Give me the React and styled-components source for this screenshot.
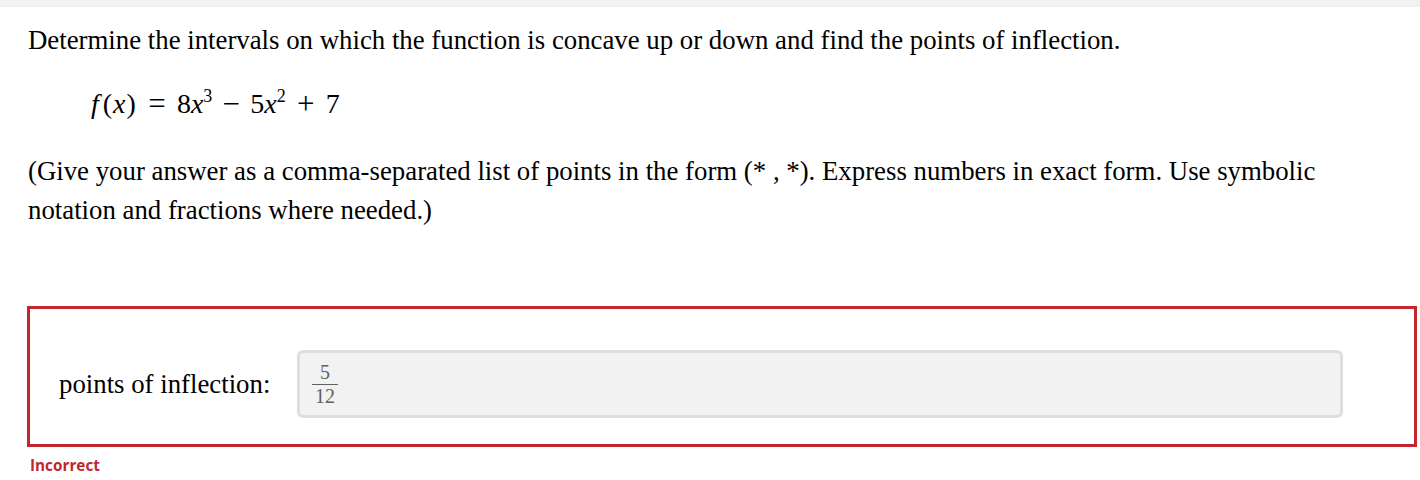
import React from "react";
import styled, { createGlobalStyle } from "styled-components";

const Global = createGlobalStyle`
  html, body { margin: 0; padding: 0; background: #fff; }
  body { font-family: "Liberation Serif", "Times New Roman", serif; color: #000; }
`;

const TopBand = styled.div`
  height: 6px;
  background: #f2f2f2;
  border-bottom: 1px solid #ececec;
`;

const Content = styled.div`
  padding: 0 3px 0 27px;
`;

const Prompt = styled.p`
  margin: 17px 0 0 1px;
  font-size: 26.8px;
  line-height: 32px;
`;

const Equation = styled.div`
  margin: 32px 0 0 64px;
  font-size: 28px;
  line-height: 32px;
  white-space: nowrap;
`;

const Term = styled.span`
  letter-spacing: ${(p) => p.$track || 0}px;
`;

const Var = styled.i`
  font-style: italic;
  margin-right: ${(p) => p.$gap || 0}px;
`;

const Sup = styled.sup`
  font-size: 18px;
  vertical-align: 11px;
  line-height: 0;
`;

const Op = styled.span`
  display: inline-block;
  width: ${(p) => p.$w}px;
  text-align: center;
  font-size: 31px;
  line-height: 32px;
  vertical-align: top;
`;

const Instructions = styled.p`
  margin: 32px 0 0 1px;
  max-width: 1340px;
  font-size: 26.8px;
  line-height: 39px;
`;

const AnswerBox = styled.div`
  margin-top: 76px;
  border: 3px solid #c1272d;
  padding: 41px 71px 26px 29px;
  display: flex;
  align-items: center;
`;

const Label = styled.span`
  font-size: 26.8px;
  width: 238px;
  flex-shrink: 0;
`;

const InputShell = styled.div`
  box-sizing: border-box;
  flex: 1;
  height: 68px;
  border: 3px solid #dedede;
  border-radius: 6px;
  background: #f2f2f2;
  display: flex;
  align-items: center;
  padding-left: 12px;
`;

const Fraction = styled.span`
  display: inline-flex;
  flex-direction: column;
  align-items: center;
  color: #606060;
  font-size: 20px;
  line-height: 19px;
`;

const Numerator = styled.span`
  padding: 0 3px 2px;
  border-bottom: 1px solid #606060;
  align-self: stretch;
  text-align: center;
`;

const Denominator = styled.span`
  padding: 2px 3px 0;
`;

const Feedback = styled.div`
  margin: 7px 0 0 3px;
  font-family: "Open Sans", "Noto Sans", sans-serif;
  font-weight: 700;
  font-size: 15.3px;
  line-height: 22px;
  color: #c1272d;
`;

export default function App() {
  return (
    <>
      <Global />
      <TopBand />
      <Content>
        <Prompt>
          Determine the intervals on which the function is concave up or down
          and find the points of inflection.
        </Prompt>
        <Equation>
          <Term $track={1}>
            <Var $gap={3}>f</Var>(<Var>x</Var>)
          </Term>
          <Op $w={40}>=</Op>
          <Term>
            8<Var>x</Var>
            <Sup>3</Sup>
          </Term>
          <Op $w={38}>−</Op>
          <Term>
            5<Var>x</Var>
            <Sup>2</Sup>
          </Term>
          <Op $w={40}>+</Op>
          <Term>7</Term>
        </Equation>
        <Instructions>
          (Give your answer as a comma-separated list of points in the form (* ,
          *). Express numbers in exact form. Use symbolic notation and fractions
          where needed.)
        </Instructions>
        <AnswerBox>
          <Label>points of inflection:</Label>
          <InputShell>
            <Fraction>
              <Numerator>5</Numerator>
              <Denominator>12</Denominator>
            </Fraction>
          </InputShell>
        </AnswerBox>
        <Feedback>Incorrect</Feedback>
      </Content>
    </>
  );
}
